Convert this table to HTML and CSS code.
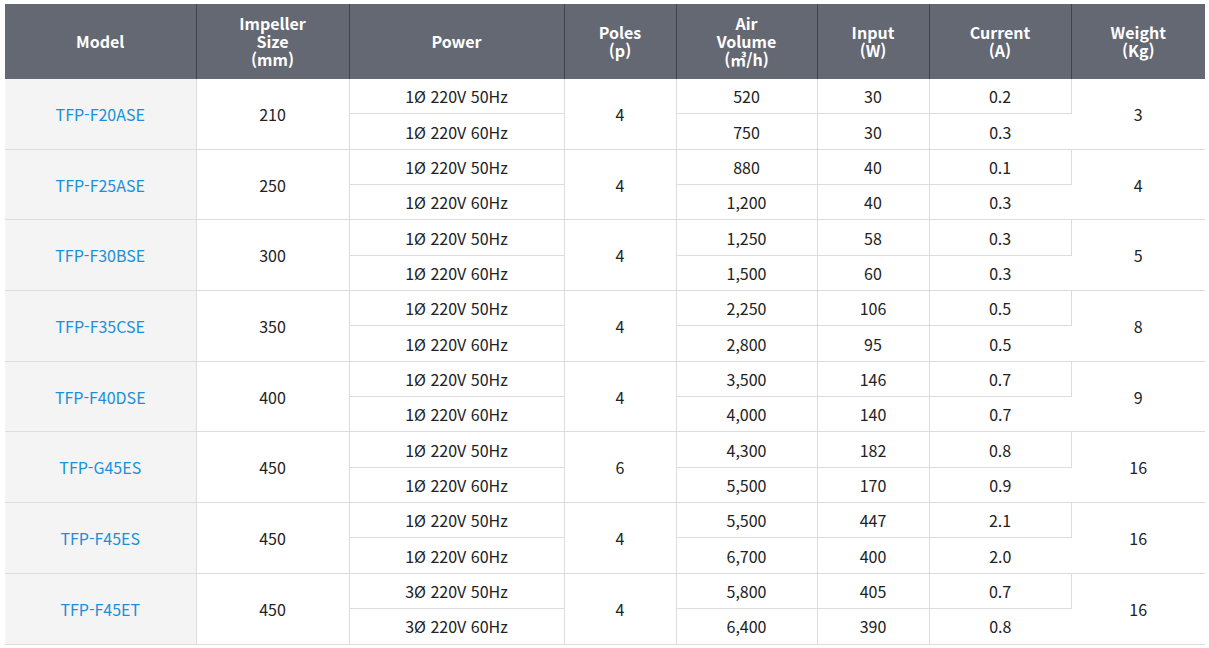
FILE: index.html
```html
<!DOCTYPE html>
<html lang="ko">
<head>
<meta charset="utf-8">
<title>Spec table</title>
<link rel="stylesheet" href="styles.css">
</head>
<body>
<table class="spec">
  <colgroup>
    <col class="c-model"><col class="c-size"><col class="c-power"><col class="c-poles">
    <col class="c-air"><col class="c-input"><col class="c-current"><col class="c-weight">
  </colgroup>
  <thead>
    <tr>
      <th>Model</th>
      <th>Impeller<br>Size<br>(mm)</th>
      <th>Power</th>
      <th>Poles<br>(p)</th>
      <th>Air<br>Volume<br>(㎥/h)</th>
      <th>Input<br>(W)</th>
      <th>Current<br>(A)</th>
      <th>Weight<br>(Kg)</th>
    </tr>
  </thead>
  <tbody>
    <tr class="first"><td rowspan="2" class="model">TFP-F20ASE</td><td rowspan="2">210</td><td>1Ø 220V 50Hz</td><td rowspan="2">4</td><td>520</td><td>30</td><td>0.2</td><td rowspan="2">3</td></tr>
    <tr class="second"><td>1Ø 220V 60Hz</td><td>750</td><td>30</td><td>0.3</td></tr>

    <tr class="first"><td rowspan="2" class="model">TFP-F25ASE</td><td rowspan="2">250</td><td>1Ø 220V 50Hz</td><td rowspan="2">4</td><td>880</td><td>40</td><td>0.1</td><td rowspan="2">4</td></tr>
    <tr class="second"><td>1Ø 220V 60Hz</td><td>1,200</td><td>40</td><td>0.3</td></tr>

    <tr class="first"><td rowspan="2" class="model">TFP-F30BSE</td><td rowspan="2">300</td><td>1Ø 220V 50Hz</td><td rowspan="2">4</td><td>1,250</td><td>58</td><td>0.3</td><td rowspan="2">5</td></tr>
    <tr class="second"><td>1Ø 220V 60Hz</td><td>1,500</td><td>60</td><td>0.3</td></tr>

    <tr class="first"><td rowspan="2" class="model">TFP-F35CSE</td><td rowspan="2">350</td><td>1Ø 220V 50Hz</td><td rowspan="2">4</td><td>2,250</td><td>106</td><td>0.5</td><td rowspan="2">8</td></tr>
    <tr class="second"><td>1Ø 220V 60Hz</td><td>2,800</td><td>95</td><td>0.5</td></tr>

    <tr class="first"><td rowspan="2" class="model">TFP-F40DSE</td><td rowspan="2">400</td><td>1Ø 220V 50Hz</td><td rowspan="2">4</td><td>3,500</td><td>146</td><td>0.7</td><td rowspan="2">9</td></tr>
    <tr class="second"><td>1Ø 220V 60Hz</td><td>4,000</td><td>140</td><td>0.7</td></tr>

    <tr class="first"><td rowspan="2" class="model">TFP-G45ES</td><td rowspan="2">450</td><td>1Ø 220V 50Hz</td><td rowspan="2">6</td><td>4,300</td><td>182</td><td>0.8</td><td rowspan="2">16</td></tr>
    <tr class="second"><td>1Ø 220V 60Hz</td><td>5,500</td><td>170</td><td>0.9</td></tr>

    <tr class="first"><td rowspan="2" class="model">TFP-F45ES</td><td rowspan="2">450</td><td>1Ø 220V 50Hz</td><td rowspan="2">4</td><td>5,500</td><td>447</td><td>2.1</td><td rowspan="2">16</td></tr>
    <tr class="second"><td>1Ø 220V 60Hz</td><td>6,700</td><td>400</td><td>2.0</td></tr>

    <tr class="first"><td rowspan="2" class="model">TFP-F45ET</td><td rowspan="2">450</td><td>3Ø 220V 50Hz</td><td rowspan="2">4</td><td>5,800</td><td>405</td><td>0.7</td><td rowspan="2">16</td></tr>
    <tr class="second"><td>3Ø 220V 60Hz</td><td>6,400</td><td>390</td><td>0.8</td></tr>
  </tbody>
</table>
</body>
</html>
```
FILE: styles.css
```css
html, body {
  margin: 0;
  padding: 0;
  background: #fff;
}
body {
  padding: 4px 4px 0 5px;
  font-family: "Noto Sans CJK KR", "Noto Sans", sans-serif;
}
.spec {
  width: 1200px;
  border-collapse: collapse;
  table-layout: fixed;
  font-size: 16px;
  color: #222;
}
.c-model { width: 191px; }
.c-size { width: 153px; }
.c-power { width: 215px; }
.c-poles { width: 112px; }
.c-air { width: 141px; }
.c-input { width: 112px; }
.c-current { width: 142px; }
.c-weight { width: 134px; }

.spec th {
  height: 73px;
  padding: 0 0 2px;
  background: #646873;
  color: #fff;
  font-weight: 700;
  font-size: 16px;
  line-height: 18px;
  text-align: center;
  vertical-align: middle;
  border-right: 1px solid #3f434b;
}
.spec th:last-child { border-right: 0; }

.spec td {
  height: 34.35px;
  padding: 0;
  text-align: center;
  vertical-align: middle;
  line-height: 20px;
  border-right: 1px solid #dcdcdc;
  border-bottom: 1px solid #dcdcdc;
}
.spec td:last-child { border-right: 0; }
.spec td.model {
  background: #f4f4f4;
  color: #1a8fdb;
}
```
